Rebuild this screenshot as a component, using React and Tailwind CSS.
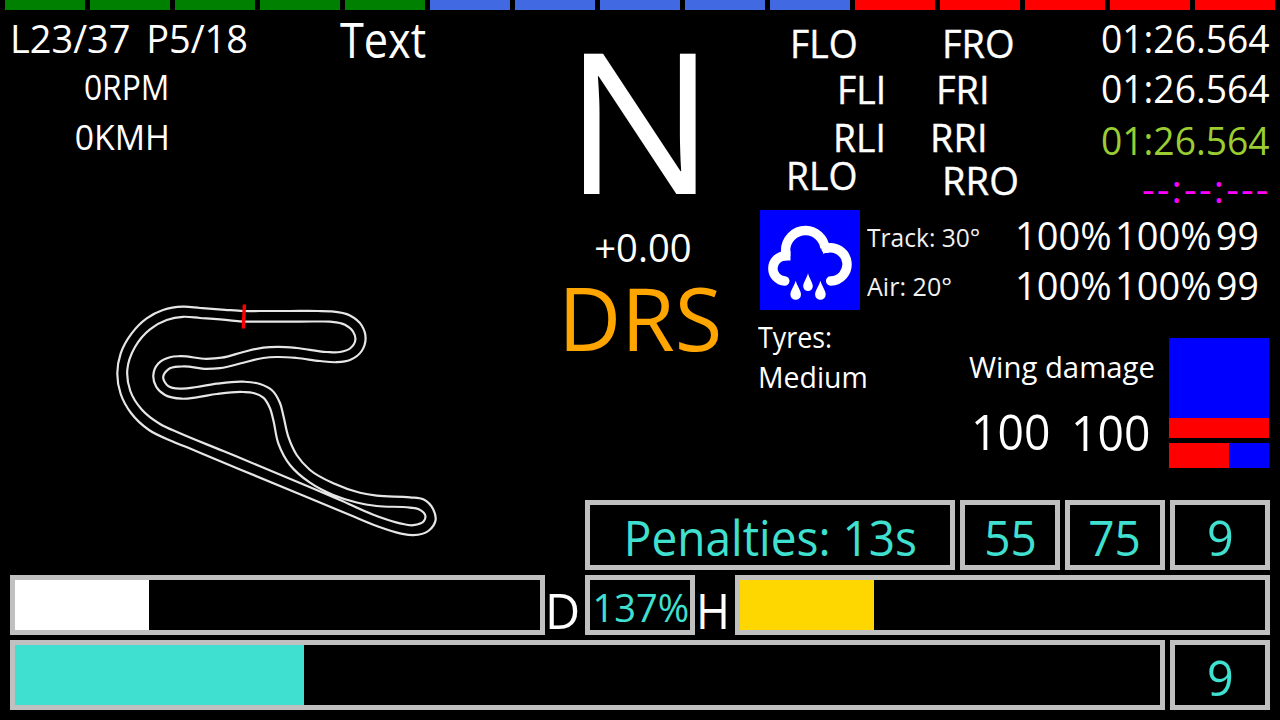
const SHIFT_LIGHTS = [
  ...Array(5).fill('bg-[#008000]'),
  ...Array(5).fill('bg-[#4169e1]'),
  ...Array(5).fill('bg-[#ff0000]'),
];

const LEFT_EDGE = [
  [243.3, 311], [225, 309.8], [200, 308], [183, 306.7], [163, 310], [146.7, 318.3], [131.7, 333.3],
  [120.7, 353.3], [117.3, 373.3], [120.7, 394], [131, 413], [149, 430], [173.3, 441.7], [190, 448.6],
  [240, 469.4], [300, 494.3], [350, 515], [376.7, 526], [400, 533.3], [413.3, 535.2], [428.3, 531],
  [435.6, 520], [433.3, 509.5], [423.3, 499.3], [410, 497.3], [376.7, 495.7], [360, 492.7],
  [333.3, 483.3], [310, 470], [296.7, 455], [288.3, 436.7], [283.6, 416.7], [280, 403], [271.7, 390],
  [260, 384], [243.3, 381.7], [216.7, 383.7], [196.7, 387], [181.7, 388.7], [168.3, 386.2],
  [163.2, 377], [168.3, 369.3], [181.7, 366.5], [206.7, 368.9], [220, 368.2], [243.3, 362.7],
  [263.3, 358], [277, 357], [296.7, 358], [320, 361], [336.7, 362.2], [350, 360], [361.7, 351],
  [365.6, 338.3], [361.7, 325.5], [350, 315.5], [330, 311.3], [318, 311], [290, 311], [260, 311],
];

const RIGHT_EDGE = [
  [243.5, 321.6], [230, 320.3], [200, 318], [183, 316.8], [166.7, 320], [150, 329.3], [135, 347],
  [127.3, 370], [130.3, 391], [141.7, 409.5], [160, 424], [180, 433.3], [223.3, 451], [260, 466.3],
  [316.7, 490], [340, 500], [376.7, 516], [400, 523.3], [413.3, 525.2], [423.8, 521.2], [425.5, 516.7],
  [418.3, 509], [410, 507.6], [376.7, 506], [356.7, 502.5], [333.3, 495], [310, 482.7], [290, 465],
  [278.3, 443.3], [273.3, 420], [270, 408.3], [263.3, 397.7], [253.3, 393], [243.3, 392],
  [216.7, 394], [196.7, 397.3], [181.7, 398.7], [165, 395], [156.2, 386.7], [153.3, 375.5],
  [158.3, 363.5], [170, 357.2], [180, 356.2], [206.7, 358.8], [221.7, 357.7], [243.3, 352],
  [263.3, 347.6], [278, 346.9], [296.7, 348], [326.7, 352], [340, 352], [350, 348.5], [355.4, 339.5],
  [353, 331.5], [345, 324.8], [330, 321.7], [318, 321.5], [290, 321.6], [260, 321.6],
];

function smoothClosed(points) {
  const n = points.length;
  const dist = (a, b) => Math.hypot(b[0] - a[0], b[1] - a[1]);
  const tangent = (i) => {
    const a = points[(i + n - 1) % n];
    const b = points[i % n];
    const c = points[(i + 1) % n];
    const d1 = dist(a, b);
    const d2 = dist(b, c);
    return [0, 1].map((k) => ((d2 * (b[k] - a[k])) / d1 + (d1 * (c[k] - b[k])) / d2) / (d1 + d2));
  };
  let d = `M${points[0][0]} ${points[0][1]}`;
  for (let i = 0; i < n; i++) {
    const p = points[i];
    const q = points[(i + 1) % n];
    const h = dist(p, q) / 3;
    const t = tangent(i);
    const u = tangent((i + 1) % n);
    d += `C${(p[0] + t[0] * h).toFixed(2)} ${(p[1] + t[1] * h).toFixed(2)} ${(q[0] - u[0] * h).toFixed(2)} ${(q[1] - u[1] * h).toFixed(2)} ${q[0]} ${q[1]}`;
  }
  return `${d}Z`;
}

function TrackMap() {
  return (
    <svg className="block" width="360" height="250" viewBox="100 296 360 250" fill="none">
      <path d={smoothClosed(LEFT_EDGE)} stroke="#e6e6e6" strokeWidth="2.2" />
      <path d={smoothClosed(RIGHT_EDGE)} stroke="#e6e6e6" strokeWidth="2.2" />
      <path d="M244.4 304.5L243.3 328.5" stroke="#ff0000" strokeWidth="3.4" />
    </svg>
  );
}

function RainIcon() {
  return (
    <svg className="block h-[100px] w-[100px] bg-[#0000ff]" viewBox="0 0 100 100" fill="none">
      <g stroke="#fff" strokeWidth="9.4" strokeLinecap="round">
        <path d="M24.8 71A12.56 12.56 0 0 1 25.1 45.9" />
        <path d="M25.6 46V41A20 20 0 0 1 45.8 20.5A19.8 19.8 0 0 1 65 38" strokeLinecap="butt" />
        <path d="M66 38.4A16.6 16.6 0 1 1 70.6 71" />
      </g>
      <path d="M24 41h6.5v9.6H24zM62 36l5-1v7l-3.8 1.9z" fill="#fff" />
      <g fill="#fff">
        <path d="M35.7 70.7C37.3 76.5 41 80.5 41 84.5A5.3 5.3 0 0 1 30.4 84.5C30.4 80.5 34.1 76.5 35.7 70.7Z" />
        <path d="M48 63.3C49.4 68.5 52.8 72.6 52.8 76.3A4.8 4.8 0 0 1 43.2 76.3C43.2 72.6 46.6 68.5 48 63.3Z" />
        <path d="M60.4 70.7C62 76.5 65.7 80.5 65.7 84.5A5.3 5.3 0 0 1 55.1 84.5C55.1 80.5 58.8 76.5 60.4 70.7Z" />
      </g>
    </svg>
  );
}

function Line({ className = '', fit = '', children }) {
  return (
    <div className={`flex shrink-0 items-center whitespace-pre leading-none ${className}`}>
      <span className={`block ${fit}`}>{children}</span>
    </div>
  );
}

function Frame({ className = '', fit = '', children }) {
  return (
    <div className={`flex shrink-0 items-center justify-center border-[5px] border-[#c0c0c0] pt-[4px] whitespace-pre leading-none text-[#40e0d0] ${className}`}>
      <span className={`block ${fit}`}>{children}</span>
    </div>
  );
}

function Gauge({ className = '', children }) {
  return <div className={`flex shrink-0 border-[5px] border-[#c0c0c0] ${className}`}>{children}</div>;
}

function LeftPanel() {
  return (
    <section className="w-[540px] shrink-0 pt-[2px]">
      <div className="flex h-[50px]">
        <Line className="w-[340px] pt-[2px] pl-[10px] text-[39.2px] [word-spacing:6px]" fit="origin-left scale-x-[0.968]">
          L23/37 P5/18
        </Line>
        <Line className="pt-[3px] text-[50px]" fit="origin-left scale-x-[0.865]">Text</Line>
      </div>
      <Line className="h-[50px] w-[169px] justify-end text-[34px]" fit="origin-right scale-x-[0.935]">0RPM</Line>
      <Line className="h-[50px] w-[170px] justify-end text-[34px]" fit="origin-right scale-x-[0.992]">0KMH</Line>
      <div className="pt-[134px] pl-[100px]">
        <TrackMap />
      </div>
    </section>
  );
}

function GearPanel() {
  return (
    <section className="flex w-[200px] shrink-0 flex-col items-center">
      <Line className="h-[216px] text-[196px]" fit="scale-x-[1.02]">N</Line>
      <Line className="h-[42px] pl-[6px] text-[39.2px]" fit="scale-x-[0.975]">+0.00</Line>
      <Line className="h-[98px] pl-px text-[88px] text-[#ffa500]" fit="scale-x-[0.985]">DRS</Line>
    </section>
  );
}

function TyreLabels() {
  return (
    <div className="flex w-[361px] pt-[10px] text-[39.2px] [-webkit-text-stroke:0.4px_white]">
      <div className="w-[190px]">
        <Line className="h-[46px] pl-[50px]" fit="origin-left scale-x-[0.95]">FLO</Line>
        <Line className="h-[46px] pl-[97px]" fit="origin-left scale-x-[0.95]">FLI</Line>
        <Line className="h-[50px] pl-[93px]" fit="origin-left scale-x-[0.95]">RLI</Line>
        <Line className="h-[26px] pl-[46px]" fit="origin-left scale-x-[0.95]">RLO</Line>
      </div>
      <div>
        <Line className="h-[46px] pl-[12px]" fit="origin-left scale-x-[0.97]">FRO</Line>
        <Line className="h-[46px] pl-[6px]" fit="origin-left scale-x-[0.97]">FRI</Line>
        <Line className="h-[50px]" fit="origin-left scale-x-[0.97]">RRI</Line>
        <Line className="h-[36px] pl-[12px]" fit="origin-left scale-x-[0.975]">RRO</Line>
      </div>
    </div>
  );
}

function LapTimes() {
  return (
    <div className="pt-[2px] text-[39.2px]">
      <Line className="h-[50px] pt-px" fit="origin-left scale-x-[0.95]">01:26.564</Line>
      <Line className="h-[50px] pt-px" fit="origin-left scale-x-[0.95]">01:26.564</Line>
      <Line className="h-[54px] pt-px text-[#9acd32]" fit="origin-left scale-x-[0.95]">01:26.564</Line>
      <Line className="h-[44px] pl-[41px] tracking-[2.2px] text-[#ff00ff]">--:--:---</Line>
    </div>
  );
}

function WearRow() {
  return (
    <div className="flex h-[50px] text-[39.2px]">
      <Line className="w-[100px]" fit="origin-left scale-x-[0.97]">100%</Line>
      <Line className="w-[101px]" fit="origin-left scale-x-[0.97]">100%</Line>
      <Line fit="origin-left scale-x-[0.955]">99</Line>
    </div>
  );
}

function RightPanel() {
  return (
    <section className="w-[540px] shrink-0">
      <div className="flex h-[200px]">
        <TyreLabels />
        <LapTimes />
      </div>
      <div className="flex h-[100px] pl-[20px]">
        <RainIcon />
        <div className="w-[155px] pt-px pl-[7px] text-[26px] text-[#f0f0f0]">
          <Line className="h-[51px]" fit="origin-left scale-x-[0.945]">Track: 30°</Line>
          <Line className="h-[48px]" fit="origin-left scale-x-[0.965]">Air: 20°</Line>
        </div>
        <div>
          <WearRow />
          <WearRow />
        </div>
      </div>
      <div className="flex pl-[18px]">
        <div className="w-[211px] pt-[8px] text-[29.3px]">
          <Line className="h-[40px]" fit="origin-left scale-x-[0.915]">Tyres:</Line>
          <Line className="h-[40px]" fit="origin-left scale-x-[0.97]">Medium</Line>
        </div>
        <div className="w-[200px] pt-[38px]">
          <Line className="h-[40px] text-[29.3px]">Wing damage</Line>
          <div className="flex pt-[17px] pl-[2px] text-[50px]">
            <Line className="h-[52px] w-[100px]" fit="origin-left scale-x-[0.925]">100</Line>
            <Line className="h-[54px]" fit="origin-left scale-x-[0.925]">100</Line>
          </div>
        </div>
        <div className="flex w-[100px] flex-col pt-[28px]">
          <div className="h-[80px] bg-[#0000ff]" />
          <div className="h-[20px] bg-[#ff0000]" />
          <div className="mt-[5px] flex h-[25px] bg-[#0000ff]">
            <div className="w-[60px] bg-[#ff0000]" />
          </div>
        </div>
      </div>
    </section>
  );
}

export default function App() {
  return (
    <main className="flex h-[720px] w-[1280px] flex-col overflow-hidden bg-black font-['Open_Sans','Noto_Sans',sans-serif] text-white">
      <div className="flex h-[10px] shrink-0 gap-[5px] px-[5px]">
        {SHIFT_LIGHTS.map((color, i) => (
          <div key={i} className={`w-[80px] ${color}`} />
        ))}
      </div>
      <div className="flex h-[490px] shrink-0">
        <LeftPanel />
        <GearPanel />
        <RightPanel />
      </div>
      <footer className="flex flex-col gap-[5px] px-[10px]">
        <div className="flex h-[70px] justify-end gap-[5px] text-[50px]">
          <Frame className="w-[370px]" fit="scale-x-[0.92]">Penalties: 13s</Frame>
          <Frame className="w-[100px] pl-px" fit="scale-x-[0.92]">55</Frame>
          <Frame className="w-[100px]" fit="scale-x-[0.92]">75</Frame>
          <Frame className="w-[100px]" fit="scale-x-[0.935]">9</Frame>
        </div>
        <div className="flex h-[60px]">
          <Gauge className="w-[535px]">
            <div className="w-[134px] bg-white" />
          </Gauge>
          <Line className="w-[40px] pt-[9px] text-[50px]" fit="origin-left scale-x-[0.97]">D</Line>
          <Frame className="w-[110px] pl-[2px] text-[39.2px]" fit="scale-x-[0.97]">137%</Frame>
          <Line className="w-[40px] pt-[9px] pl-px text-[50px]" fit="origin-left scale-x-[0.92]">H</Line>
          <Gauge className="w-[535px]">
            <div className="w-[134px] bg-[#ffd700]" />
          </Gauge>
        </div>
        <div className="flex h-[70px] gap-[5px]">
          <Gauge className="w-[1155px]">
            <div className="w-[289px] bg-[#40e0d0]" />
          </Gauge>
          <Frame className="w-[100px] text-[50px]" fit="scale-x-[0.935]">9</Frame>
        </div>
      </footer>
    </main>
  );
}
